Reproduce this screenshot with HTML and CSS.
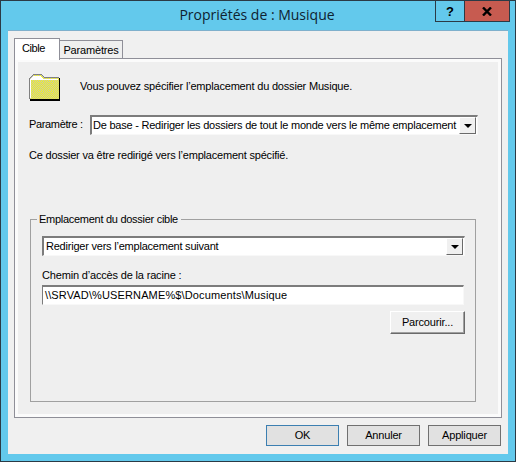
FILE: index.html
```html
<!DOCTYPE html>
<html lang="fr">
<head>
<meta charset="utf-8">
<title>Propriétés de : Musique</title>
<link rel="stylesheet" href="styles.css">
</head>
<body>
<div class="window">
  <header class="titlebar">
    <div class="title">Propriétés de : Musique</div>
    <div class="caption">
      <div class="cap-btn help">?</div>
      <div class="cap-btn close">
        <svg width="10" height="9" viewBox="0 0 10 9"><path d="M1 .5 L9 8.5 M9 .5 L1 8.5" stroke="#000" stroke-width="2.4" fill="none"/></svg>
      </div>
    </div>
  </header>
  <div class="client">
    <div class="tabs">
      <div class="tab active">Cible</div>
      <div class="tab">Paramètres</div>
    </div>
    <section class="panel">
      <div class="intro">
        <svg class="folder" width="32" height="28" viewBox="0 1 32 28" shape-rendering="crispEdges">
          <defs>
            <pattern id="dither" width="2" height="2" patternUnits="userSpaceOnUse">
              <rect width="2" height="2" fill="#f7f71a"/>
              <rect width="1" height="1" fill="#c4c4b0"/>
              <rect x="1" y="1" width="1" height="1" fill="#c4c4b0"/>
            </pattern>
          </defs>
          <path d="M1 28 H31 V5 H30 V26 H1 Z" fill="#000"/>
          <path d="M1 26 H30 V5 H16 L13 2 H4 L1 5 Z" fill="url(#dither)"/>
          <path d="M0 26 V5 H1 V4 H2 V3 H3 V2 H4 V1 H13 V2 H14 V3 H15 V4 H30 V5 H15 V4 H14 V3 H13 V2 H4 V3 H3 V4 H2 V5 H1 V26 Z" fill="#808080"/>
          <path d="M1 6 H2 V5 H3 V4 H4 V3 H12 V4 H13 V5 H14 V6 H29 V7 H2 V25 H1 Z" fill="#ffffff"/>
        </svg>
        <p class="intro-text">Vous pouvez spécifier l’emplacement du dossier Musique.</p>
      </div>
      <div class="setting">
        <label class="setting-label">Paramètre :</label>
        <div class="combo setting-combo">
          <span class="combo-text">De base - Rediriger les dossiers de tout le monde vers le même emplacement</span>
          <span class="arrow"></span>
        </div>
      </div>
      <p class="note">Ce dossier va être redirigé vers l’emplacement spécifié.</p>
      <fieldset class="group">
        <legend>Emplacement du dossier cible</legend>
        <div class="combo">
          <span class="combo-text">Rediriger vers l’emplacement suivant</span>
          <span class="arrow"></span>
        </div>
        <div class="path-label">Chemin d’accès de la racine :</div>
        <div class="input">\\SRVAD\%USERNAME%$\Documents\Musique</div>
        <div class="browse-row"><div class="browse">Parcourir...</div></div>
      </fieldset>
    </section>
    <footer class="actions">
      <div class="btn default">OK</div>
      <div class="btn">Annuler</div>
      <div class="btn">Appliquer</div>
    </footer>
  </div>
</div>
</body>
</html>
```
FILE: styles.css
```css
* { box-sizing: border-box; }
html, body { margin: 0; padding: 0; }
body { width: 516px; height: 462px; overflow: hidden; font: 11px/15px "Liberation Sans", Arial, sans-serif; letter-spacing: -0.17px; color: #000; }
p { margin: 0; }

.window {
  width: 516px; height: 462px;
  background: #63c9ec;
  border: 1px solid #2b3a45;
  padding: 0 7px 7px;
  display: flex; flex-direction: column;
}
.titlebar { height: 29px; display: flex; flex: none; position: relative; }
.title {
  flex: 1; text-align: center;
  font: 14px/20px "Open Sans", "Noto Sans", sans-serif;
  letter-spacing: 0;
  color: #0e2230;
  padding: 4px 2px 0 0;
}
.caption { position: absolute; right: -2px; top: 0; display: flex; height: 21px; }
.cap-btn {
  height: 21px;
  display: flex; align-items: center; justify-content: center;
  border: 1px solid #2b3a45; border-top: 0;
  font: bold 13px "Liberation Sans", sans-serif;
}
.help { width: 29px; border-right: 0; }
.close { width: 46px; background: #c75b50; }

.client {
  flex: 1;
  background: #f0f0f0;
  border-top: 1px solid #7fb0cc;
  padding: 6px 6px 0;
  display: flex; flex-direction: column;
}
.tabs { display: flex; align-items: flex-end; height: 21px; position: relative; z-index: 1; }
.tab {
  width: 63px; height: 18px;
  border: 1px solid #8f8f98; border-left: 0; border-bottom: 0;
  background: #efefef;
  text-align: center; line-height: 18px;
}
.tab.active {
  width: 46px; height: 22px;
  background: #fff;
  border-left: 1px solid #8f8f98;
  margin-bottom: -2px;
  text-align: left;
  padding-left: 7px; line-height: 18px;
  letter-spacing: -0.4px;
}

.panel {
  height: 360px;
  background: #efefef;
  border: 1px solid #8f8f98;
  box-shadow: inset 0 0 0 3px #fbfbfb;
  padding: 15px 14px 0 14px;
}
.intro { display: flex; align-items: center; height: 28px; }
.folder { flex: none; }
.intro-text { margin-left: 19px; margin-top: -4px; letter-spacing: -0.19px; }
.setting { display: flex; align-items: center; margin-top: 13px; }
.setting-label { width: 61px; flex: none; margin-top: -2px; letter-spacing: -0.35px; }
.setting-combo { width: 388px; padding-left: 1px; letter-spacing: -0.225px; }
.combo {
  height: 20px;
  background: #fff;
  border-style: solid;
  border-width: 2px 1px 1px 2px;
  border-color: #7c7c7c #f8f8f8 #f8f8f8 #7c7c7c;
  display: flex; align-items: center; justify-content: space-between;
  white-space: nowrap;
}
.group .combo { padding-left: 2px; letter-spacing: -0.22px; }
.arrow {
  width: 17px; height: 17px; flex: none;
  margin-right: 1px;
  background: #f0f0f0;
  border: 1px solid; border-color: #fff #6a6a6a #6a6a6a #fff;
  display: flex; align-items: center; justify-content: center;
}
.arrow::after {
  content: ""; border: 4px solid transparent; border-top: 4px solid #000; border-bottom: 0;
}
.note { margin-top: 13px; letter-spacing: -0.2px; }
.group {
  margin: 49px 0 0 1px; padding: 0 10px 0 11px;
  width: 446px; height: 190px;
  border: 1px solid #a0a0a0;
  min-width: 0;
}
.group legend { margin-left: -5px; padding: 0 3px 0 2px; line-height: 15px; margin-bottom: 9px; letter-spacing: -0.28px; }
.path-label { margin-top: 12px; height: 15px; }
.input {
  margin-top: 2px;
  width: 422px; height: 20px;
  background: #fff;
  border-style: solid;
  border-width: 2px 1px 1px 1px;
  border-color: #7c7c7c #f8f8f8 #f8f8f8 #7c7c7c;
  padding-left: 2px;
  line-height: 16px;
  letter-spacing: 0.13px;
}
.browse-row { display: flex; justify-content: flex-end; margin-top: 6px; }
.browse {
  width: 75px; height: 23px;
  background: #f0f0f0;
  border: 1px solid; border-color: #fff #6a6a6a #6a6a6a #fff;
  box-shadow: inset -1px -1px 0 #a0a0a0;
  text-align: center; line-height: 20px;
}
.actions { display: flex; justify-content: flex-end; gap: 8px; margin-top: 7px; padding-right: 1px; }
.btn {
  width: 73px; height: 21px;
  background: #e1e1e1;
  border: 1px solid #707070;
  text-align: center; line-height: 19px;
}
.btn.default { border-color: #3c7fb1; }
```
